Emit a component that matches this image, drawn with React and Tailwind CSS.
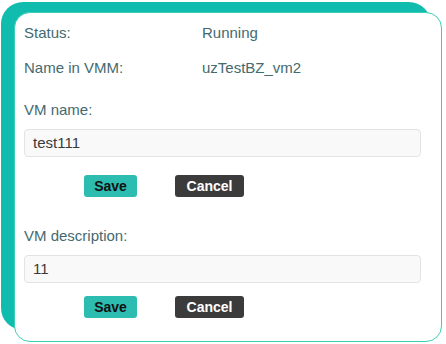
import React from "react";

export default function App() {
  const font = { fontFamily: '"Liberation Sans", Arial, sans-serif' };
  return (
    <div className="relative w-[446px] h-[344px] bg-white overflow-hidden" style={font}>
      <div className="absolute left-[1px] top-[2px] w-[430px] h-[328px] rounded-[22px] bg-[#0fbcae]" />
      <div className="absolute left-[14px] top-[12px] w-[428px] h-[330px] rounded-[16px] border border-[#3ccfb7] bg-white pl-[9px] pr-[20px] pt-[10px] text-[15px] text-[#436a70]">
        <div className="flex h-[20px] items-center">
          <div className="w-[178px]">Status:</div>
          <div>Running</div>
        </div>
        <div className="mt-[15px] flex h-[20px] items-center">
          <div className="w-[178px]">Name in VMM:</div>
          <div>uzTestBZ_vm2</div>
        </div>
        <div className="mt-[22px] h-[20px] flex items-center">VM name:</div>
        <div className="mt-[9px] h-[28px] rounded-[4px] border border-[#e3e3e3] bg-[#f9f9f9] pl-[8px] flex items-center text-[#3a3a3a]">test111</div>
        <div className="mt-[18px] flex gap-[38px] pl-[60px]">
          <button className="h-[22px] w-[53px] rounded-[3px] bg-[#2cbcb0] text-[14px] font-bold text-[#111]">Save</button>
          <button className="h-[22px] w-[69px] rounded-[3px] bg-[#3b3b3b] text-[14px] font-bold text-white">Cancel</button>
        </div>
        <div className="mt-[29px] h-[20px] flex items-center">VM description:</div>
        <div className="mt-[9px] h-[28px] rounded-[4px] border border-[#e3e3e3] bg-[#f9f9f9] pl-[8px] flex items-center text-[#3a3a3a]">11</div>
        <div className="mt-[13px] flex gap-[38px] pl-[60px]">
          <button className="h-[22px] w-[53px] rounded-[3px] bg-[#2cbcb0] text-[14px] font-bold text-[#111]">Save</button>
          <button className="h-[22px] w-[69px] rounded-[3px] bg-[#3b3b3b] text-[14px] font-bold text-white">Cancel</button>
        </div>
      </div>
    </div>
  );
}
